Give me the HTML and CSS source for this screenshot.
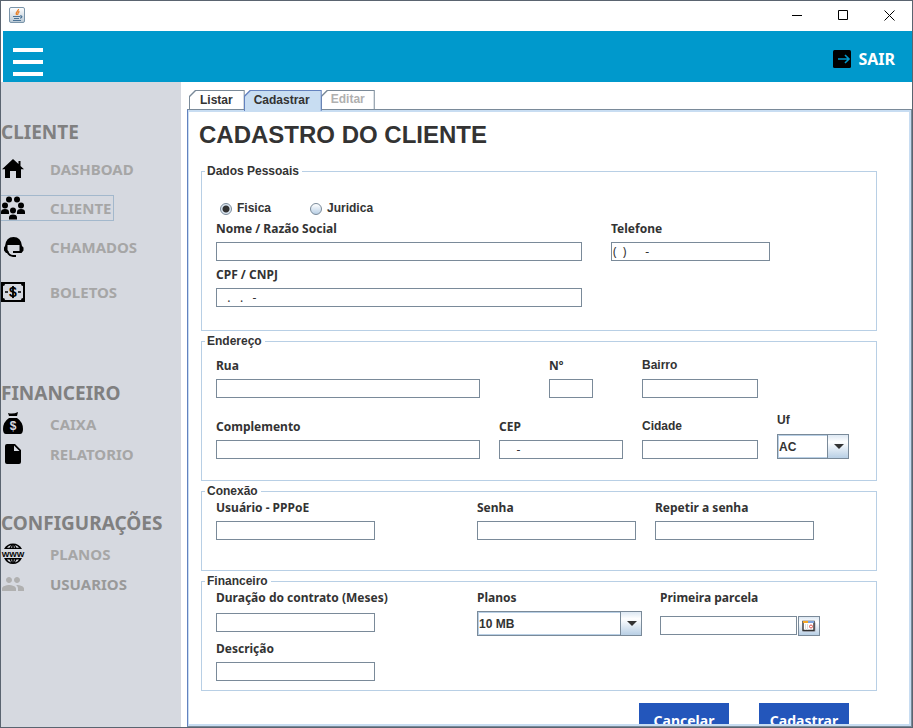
FILE: index.html
```html
<!DOCTYPE html>
<html lang="pt-BR">
<head>
<meta charset="utf-8">
<title>Cadastro do Cliente</title>
<link rel="stylesheet" href="styles.css">
</head>
<body>
<div class="window">
  <div class="titlebar">
    <svg class="app-icon" width="16" height="16" viewBox="0 0 16 16" aria-hidden="true">
      <defs><linearGradient id="cup" x1="0" y1="0" x2="0" y2="1"><stop offset="0" stop-color="#fff"/><stop offset="1" stop-color="#b9c8d4"/></linearGradient></defs>
      <rect x=".5" y=".5" width="15" height="15" rx="1.5" fill="url(#cup)" stroke="#7b95aa"/>
      <path d="M9.500 2C10 4 6 4.500 7.500 8M10.500 4.500C8.500 5 9.500 6 8.500 8" fill="none" stroke="#e8822c" stroke-width="1.300"/>
      <path d="M4 9.500h7M5 11.500h5M4 13.500h8M11 9c2.500-.5 2.500 2 0 2.200" fill="none" stroke="#4c7396" stroke-width="1.200"/>
    </svg>
    <div class="window-controls">
      <button type="button" aria-label="Minimizar"><svg width="11" height="11" viewBox="0 0 11 11"><path d="M0 5.500h10" stroke="#000"/></svg></button>
      <button type="button" aria-label="Maximizar"><svg width="11" height="11" viewBox="0 0 11 11"><path d="M.5.5h9v9h-9z" fill="none" stroke="#000"/></svg></button>
      <button type="button" aria-label="Fechar"><svg width="11" height="11" viewBox="0 0 11 11"><path d="M.5.5l10 10M10.500.5l-10 10" stroke="#000"/></svg></button>
    </div>
  </div>

  <header class="topbar">
    <button type="button" class="menu-button" aria-label="Menu"><svg width="30" height="28" viewBox="0 0 30 28"><path d="M0 0h30v4H0zM0 12h30v4H0zM0 24h30v4H0z" fill="#fff"/></svg></button>
    <button type="button" class="logout">
      <svg width="18" height="18" viewBox="0 0 18 18" aria-hidden="true"><rect width="18" height="18" rx="1.500" fill="#000"/><path d="M5 9h11M12 5l4 4-4 4" fill="none" stroke="#09c" stroke-width="1.600"/></svg>
      SAIR
    </button>
  </header>

  <div class="body">
    <nav class="sidebar" aria-label="Principal">
      <h2>CLIENTE</h2>
      <ul class="menu menu-wide">
        <li><a href="#dashboad"><svg width="24" height="24" viewBox="0 0 24 24"><path d="M12 2L1 12.200h3V21h5v-7h6v7h5v-8.800h3l-3.500-3.300V4h-2v3z"/></svg>DASHBOAD</a></li>
        <li><a href="#cliente" class="focused"><svg width="24" height="24" viewBox="0 0 24 24"><circle cx="8" cy="3.500" r="3"/><circle cx="16" cy="3.500" r="3"/><circle cx="4" cy="9.500" r="3"/><circle cx="20" cy="9.500" r="3"/><circle cx="12" cy="14.500" r="3"/><path d="M0 18v-2q0-3 4-3t4 3v2zM16 18v-2q0-3 4-3t4 3v2zM8 23.500v-2q0-3 4-3t4 3v2z"/></svg>CLIENTE</a></li>
        <li><a href="#chamados"><svg width="24" height="24" viewBox="0 0 24 24"><path d="M4 11Q5 2 12.500 2T21 11l1.500 1.500v3L20.500 18H12v-2h6.500v-6h-12v5l1 1.500v1.500H5l-2-2.500v-3z"/><path d="M6 16q2 5 6 5h3" fill="none" stroke="#000" stroke-width="2"/></svg>CHAMADOS</a></li>
        <li class="apart"><a href="#boletos"><svg width="24" height="24" viewBox="0 0 24 24"><path fill-rule="evenodd" d="M0 2h24v20H0zM4 4Q4 6 2 6v12q2 0 2 2h16q0-2 2-2V6q-2 0-2-2z"/><path d="M4 12h3M17 12h3M12 6v12" fill="none" stroke="#000" stroke-width="1.700"/><text x="12" y="17" class="glyph bill">$</text></svg>BOLETOS</a></li>
      </ul>

      <h2 class="second">FINANCEIRO</h2>
      <ul class="menu">
        <li><a href="#caixa"><svg width="24" height="24" viewBox="0 0 24 24"><path d="M7 1q5 1.500 10-1l-1 4H8zM8 6h8q6 4 6 11 0 5-3 5H5q-3 0-3-5Q2 10 8 6z"/><text x="12" y="18" class="glyph bag">$</text></svg>CAIXA</a></li>
        <li><a href="#relatorio"><svg width="24" height="24" viewBox="0 0 24 24"><path fill-rule="evenodd" d="M6 2q-2 0-2 2v16q0 2 2 2h12q2 0 2-2V8l-6-6zm7 1.500L18.500 9H13z"/></svg>RELATORIO</a></li>
      </ul>

      <h2 class="third">CONFIGURAÇÕES</h2>
      <ul class="menu">
        <li><a href="#planos"><svg width="24" height="24" viewBox="0 0 24 24"><path fill-rule="evenodd" d="M3 7Q6 1.500 12 1.500t9 5.500zM3 16q3 6 9 6t9-6zM6 5.800h2.500L10 3Q7 4 6 5.800zM10 5.800h1.200V3zM12.800 5.800H14L12.800 3zM15.500 5.800H18Q17 4 14 3zM6 17.500h2.500l1.500 3q-3-1-4-3zM10 17.500h1.200v3zM12.800 17.500H14l-1.200 3zM15.500 17.500H18q-1 2-4 3z"/><text x="12" y="15" class="glyph web">WWW</text></svg>PLANOS</a></li>
        <li><a href="#usuarios" class="muted"><svg width="24" height="24" viewBox="0 0 24 24"><path d="M16 11c1.660 0 2.990-1.340 2.990-3S17.660 5 16 5s-3 1.340-3 3 1.340 3 3 3zm-8 0c1.660 0 2.990-1.340 2.990-3S9.660 5 8 5 5 6.340 5 8s1.340 3 3 3zm0 2c-2.330 0-7 1.170-7 3.500V19h14v-2.500c0-2.330-4.670-3.500-7-3.500zm8 0c-.29 0-.62.020-.97.050 1.160.84 1.970 1.970 1.970 3.450V19h6v-2.500c0-2.330-4.670-3.500-7-3.500z"/></svg>USUARIOS</a></li>
      </ul>
    </nav>

    <main class="main">
      <div class="tabs" role="tablist">
        <button type="button" role="tab" class="tab"><span>Listar</span></button>
        <button type="button" role="tab" class="tab selected" aria-selected="true"><span>Cadastrar</span></button>
        <button type="button" role="tab" class="tab disabled" disabled><span>Editar</span></button>
      </div>
      <div class="pane">
        <form class="sheet">
          <h1>CADASTRO DO CLIENTE</h1>

          <fieldset class="personal">
            <legend>Dados Pessoais</legend>
            <div class="radios">
              <label><input type="radio" name="tipo" checked>Fisica</label>
              <label><input type="radio" name="tipo">Juridica</label>
            </div>
            <div class="grid grid-personal">
              <div class="field"><label for="nome">Nome / Razão Social</label><input type="text" id="nome"></div>
              <div class="field"><label for="telefone">Telefone</label><input type="text" id="telefone" value="(  )      -"></div>
              <div class="field first"><label for="cpf">CPF / CNPJ</label><input type="text" id="cpf" value="   .   .   -"></div>
            </div>
          </fieldset>

          <fieldset class="address">
            <legend>Endereço</legend>
            <div class="grid grid-address">
              <div class="field"><label for="rua">Rua</label><input type="text" id="rua"></div>
              <div class="field number"><label for="numero">Nº</label><input type="text" id="numero"></div>
              <div class="field plain"><label for="bairro">Bairro</label><input type="text" id="bairro"></div>
              <div class="field first"><label for="complemento">Complemento</label><input type="text" id="complemento"></div>
              <div class="field"><label for="cep">CEP</label><input type="text" id="cep" value="     -"></div>
              <div class="field plain"><label for="cidade">Cidade</label><input type="text" id="cidade"></div>
              <div class="field plain"><label for="uf">Uf</label><div class="combo"><select id="uf"><option>AC</option></select></div></div>
            </div>
          </fieldset>

          <fieldset class="connection">
            <legend>Conexão</legend>
            <div class="grid grid-connection">
              <div class="field"><label for="usuario">Usuário - PPPoE</label><input type="text" id="usuario"></div>
              <div class="field"><label for="senha">Senha</label><input type="password" id="senha"></div>
              <div class="field"><label for="repetir">Repetir a senha</label><input type="password" id="repetir"></div>
            </div>
          </fieldset>

          <fieldset class="finance">
            <legend>Financeiro</legend>
            <div class="grid grid-finance">
              <div class="field roomy"><label for="duracao">Duração do contrato (Meses)</label><input type="text" id="duracao"></div>
              <div class="field"><label for="planos">Planos</label><div class="combo"><select id="planos"><option>10 MB</option></select></div></div>
              <div class="field spread"><label for="parcela">Primeira parcela</label>
                <div class="date"><input type="text" id="parcela"><button type="button" aria-label="Escolher data"><svg width="14" height="12" viewBox="0 0 14 12"><path d="M1.500 2.500h12v9h-12z" fill="#aab"/><path d="M1 1.500h11v9H1z" fill="#fff" stroke="#333" stroke-width="1.400"/><path d="M1 1h5v2H1z" fill="#f5a623"/><path d="M6 1h6v2H6z" fill="#7fa3dc"/><path d="M3.500 4v6M5.500 4v6" stroke="#ddd"/><circle cx="9" cy="6.500" r="1.500" fill="none" stroke="#e0574f"/></svg></button></div>
              </div>
              <div class="field first"><label for="descricao">Descrição</label><input type="text" id="descricao"></div>
            </div>
          </fieldset>

          <div class="actions">
            <button type="button">Cancelar</button>
            <button type="submit">Cadastrar</button>
          </div>
        </form>
      </div>
    </main>
  </div>
</div>
</body>
</html>
```
FILE: styles.css
```css
:root {
  --ui: "Noto Sans", "Open Sans", sans-serif;
  --dialog: "Liberation Sans", Arial, sans-serif;
  --edge: #7a8a99;
  --soft: #b8cfe5;
  --tint: #c8ddf2;
  --ink: #333;
}

* { box-sizing: border-box; }

body { margin: 0; font: bold 12px/15px var(--ui); color: var(--ink); }

h1, h2, ul { margin: 0; padding: 0; }
button, input, select { font: inherit; color: inherit; margin: 0; padding: 0; }
button { border: 0; background: none; }
svg { display: block; flex: none; }

.window {
  display: flex;
  flex-direction: column;
  height: 100vh;
  border: 1px solid #5a6470;
  background: #fff;
  overflow: hidden;
}

.titlebar {
  display: flex;
  justify-content: space-between;
  align-items: center;
  flex: none;
  height: 30px;
  padding: 0 0 2px 8px;
}

.window-controls { display: flex; }
.window-controls button { display: grid; place-items: center; width: 46px; height: 28px; }

.topbar {
  display: flex;
  justify-content: space-between;
  align-items: center;
  flex: none;
  height: 51px;
  margin-left: 2px;
  padding: 10px 17px 0 10px;
  background: #09c;
}

.logout {
  display: flex;
  align-items: center;
  gap: 7px;
  margin-bottom: 5px;
  font-size: 16px;
  line-height: 20px;
  color: #fff;
}

.body { display: flex; flex: 1; min-height: 0; }

.sidebar {
  flex: none;
  width: 180px;
  padding-top: 38px;
  background: #d6d9e0;
}

.sidebar h2 { font-size: 19px; line-height: 24px; color: #808080; }
.sidebar .second { margin-top: 76px; }
.sidebar .third { margin-top: 44px; }

.menu { display: flex; flex-direction: column; gap: 4px; margin-top: 6px; list-style: none; }
.menu-wide { gap: 13px; margin-top: 12px; }
.menu .apart { margin-top: 6px; }

.menu li { display: flex; }
.menu a {
  display: flex;
  align-items: center;
  gap: 25px;
  height: 26px;
  border: 1px solid transparent;
  border-left: 0;
  font-size: 15px;
  line-height: 20px;
  color: #a6a6a6;
  text-decoration: none;
}
.menu .focused { border-color: #a3b8cc; padding-right: 1px; }
.menu .muted { color: #999; }
.menu .muted svg { fill: #b0b0b0; }

.glyph { font-family: var(--dialog); font-weight: bold; text-anchor: middle; fill: #000; }
.bill { font-size: 14px; }
.bag { font-size: 12px; fill: #d6d9e0; }
.web { font-size: 8px; }

.main {
  display: flex;
  flex-direction: column;
  flex: 1;
  min-width: 0;
  padding: 8px 0 0 6px;
}

.tabs { display: flex; flex: none; height: 19px; padding-left: 2px; font-family: var(--dialog); }

.tab {
  position: relative;
  margin-right: -1px;
  padding: 1px 12px 0 11px;
  background: var(--edge);
  clip-path: polygon(6px 0, 100% 0, 100% 100%, 0 100%, 0 6px);
}
.tab::before {
  content: "";
  position: absolute;
  inset: 1px 1px 0;
  background: #fff;
  clip-path: polygon(6px 0, 100% 0, 100% 100%, 0 100%, 0 6px);
}
.tab span { position: relative; }
.tab.selected { z-index: 1; height: 21px; padding: 0 12px 0 10px; background: #6382bf; }
.tab.selected::before { background: var(--tint); }
.tab.disabled { padding: 0 10px; color: #b0b0b0; }

.pane {
  flex: 1;
  min-height: 0;
  border: 1px solid var(--edge);
  border-left-color: #6382bf;
}

.sheet {
  height: 100%;
  overflow: hidden;
  border: 2px solid var(--tint);
  border-left-width: 1px;
  padding: 9px 32px 0 12px;
}

h1 { margin-left: -2px; font: bold 24px/28px var(--dialog); }

fieldset {
  min-width: 0;
  margin: 3px 0 0;
  padding: 0 0 0 14px;
  border: 1px solid var(--soft);
}
legend { margin-left: -11px; padding: 0 3px 0 2px; font-family: var(--dialog); }

.personal { margin-top: 15px; padding-top: 22px; padding-bottom: 23px; }
.address { padding-top: 9px; padding-bottom: 21px; }
.connection { padding-top: 1px; padding-bottom: 30px; }
.finance { padding-top: 1px; padding-bottom: 9px; }

.radios { display: flex; gap: 39px; margin-bottom: 5px; padding-left: 4px; font-family: var(--dialog); }
.radios label { display: flex; align-items: center; gap: 5px; }
.radios input {
  appearance: none;
  width: 12px;
  height: 12px;
  border: 1px solid var(--edge);
  border-radius: 50%;
  background: linear-gradient(#fff, var(--soft));
}
.radios input:checked { background: radial-gradient(circle, var(--ink) 3px, #dde8f3 4px); }

.grid { display: grid; align-items: end; }
.grid-personal { grid-template-columns: 366fr 159fr 77fr; gap: 6px 29px; }
.grid-address { grid-template-columns: 264fr 124fr 116fr 72fr; gap: 15px 19px; padding-right: 27px; }
.grid-connection { grid-template-columns: 159fr 102px 159fr 19px 159fr 62px; }
.grid-finance { grid-template-columns: 159fr 102px 165fr 18px 160fr 56px; row-gap: 5px; align-items: stretch; }

.grid-connection .field:nth-child(2), .grid-finance .field:nth-child(2) { grid-column: 3; }
.grid-connection .field:nth-child(3), .grid-finance .field:nth-child(3) { grid-column: 5; }
.grid .first { grid-column: 1; }

.field { display: flex; flex-direction: column; gap: 6px; min-width: 0; white-space: nowrap; }
.number { width: 44px; justify-self: end; margin-right: 30px; }
.roomy { gap: 8px; }
.spread { justify-content: space-between; }
.plain { font-family: var(--dialog); }

.field input {
  width: 100%;
  height: 19px;
  border: 1px solid var(--edge);
  background: #fff;
  padding-left: 1px;
  font-weight: normal;
}

.combo { position: relative; height: 25px; font-family: var(--dialog); }
.combo select {
  appearance: none;
  width: 100%;
  height: 25px;
  padding: 1px 0 0 1px;
  border: 1px solid var(--edge);
  border-radius: 0;
  background: #fff;
  box-shadow: inset 0 0 0 1px var(--soft);
}
.combo::before {
  content: "";
  position: absolute;
  inset: 0 0 0 auto;
  width: 20px;
  border: 1px solid var(--edge);
  background: linear-gradient(#dde8f3, #fff 30%, var(--soft));
  pointer-events: none;
}
.combo::after {
  content: "";
  position: absolute;
  top: 10px;
  right: 5px;
  border: 5px solid transparent;
  border-top-color: var(--ink);
  border-bottom: 0;
  pointer-events: none;
}

.date { display: flex; gap: 1px; }
.date button {
  display: grid;
  place-items: center;
  flex: none;
  width: 22px;
  height: 20px;
  border: 1px solid var(--edge);
  background: linear-gradient(#dde8f3, #fff 30%, var(--soft));
}

.actions { display: flex; justify-content: flex-end; gap: 30px; margin-top: 12px; padding-right: 28px; }
.actions button {
  width: 90px;
  height: 35px;
  background: #2356bb;
  color: #fff;
  font-size: 14px;
  line-height: 20px;
}
```
